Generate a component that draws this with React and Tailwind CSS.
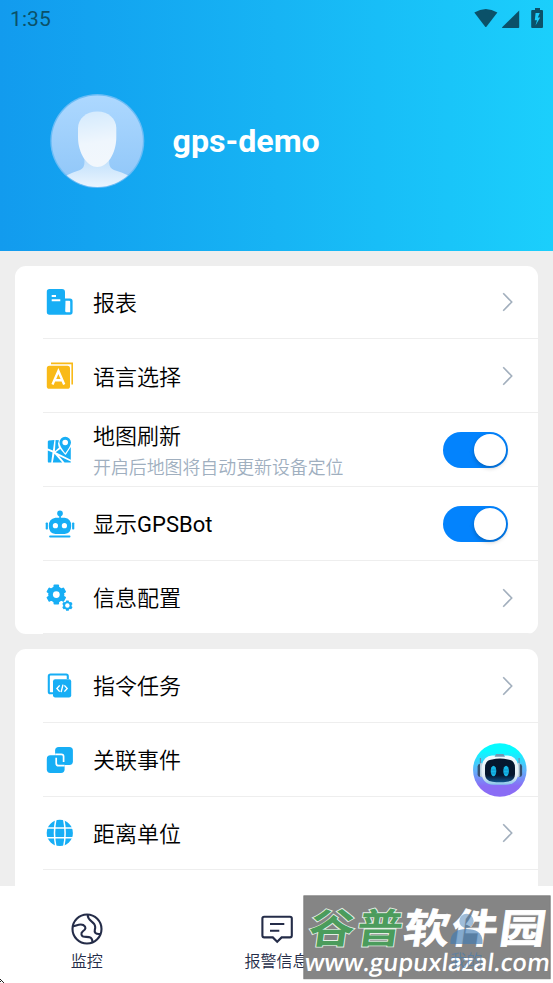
import React from "react";

const FONT = "font-['Roboto','Noto_Sans_CJK_SC',sans-serif]";
const BLUE = "#17aef5";

function StatusBar() {
  return (
    <div className="flex h-10 items-start justify-between pl-[10px] pr-[9px] text-[#0b5169]">
      <span className="mt-[4px] text-[21px] leading-[30px] tracking-[0.1px]">1:35</span>
      <svg className="mt-[6px]" width="71" height="24" viewBox="0 0 71 24" fill="currentColor">
        <path d="M1.3 6.6Q12.8-.8 24.4 6.6L13.6 20.4Q12.8 21.4 12 20.4Z" />
        <path d="M46.2 4.6V21.2Q46.2 22 45.4 22H29.8Q28.6 22 29.4 21Z" />
        <path
          fillRule="evenodd"
          d="M62 2H67V4H69Q70 4 70 5V21Q70 22 69 22H59.2Q58.2 22 58.2 21V5Q58.2 4 59.2 4H62ZM62.6 7 61.8 14.2H64L62.5 19.6 67.2 11.4H64.8L66.8 7Z"
        />
      </svg>
    </div>
  );
}

function Avatar() {
  return (
    <svg width="95" height="95" viewBox="0 0 95 95">
      <defs>
        <linearGradient id="avBg" x1="0" y1="0" x2="0" y2="1">
          <stop offset="0" stopColor="#add8ff" />
          <stop offset="1" stopColor="#8fc6f8" />
        </linearGradient>
        <linearGradient id="avFace" x1="0" y1="0" x2="0.1" y2="1">
          <stop offset="0" stopColor="#d3eafd" />
          <stop offset="0.6" stopColor="#eff6fd" />
          <stop offset="1" stopColor="#f2f7fc" />
        </linearGradient>
        <linearGradient id="avBody" x1="0" y1="0" x2="0" y2="1">
          <stop offset="0" stopColor="#b8dcfb" />
          <stop offset="1" stopColor="#eef6fe" />
        </linearGradient>
        <clipPath id="avClip"><circle cx="47.3" cy="47" r="46" /></clipPath>
      </defs>
      <circle cx="47.3" cy="47" r="47" fill="#6abcf6" />
      <circle cx="47.3" cy="47" r="45.6" fill="url(#avBg)" />
      <g clipPath="url(#avClip)">
        <path d="M34.4 60V69Q34.4 74 30 76L23 78.5Q17.5 80.5 15 83V95H80V83Q77 80.5 71.6 78.5L64 76Q59.2 74 59.2 69V60Z" fill="url(#avBody)" />
        <path d="M28 34C28 25 36 17.5 47.3 17.5S66.3 25 66.3 34V43C66.3 60 57 73 47.3 73S28 60 28 43Z" fill="url(#avFace)" />
      </g>
    </svg>
  );
}

function ReportIcon() {
  return (
    <svg width="28" height="28" viewBox="0 0 28 28">
      <path d="M3.5 1H16Q19 1 19 4V10.6H24Q26.6 10.6 26.6 13.2V24Q26.6 26.8 24 26.8H3.5Q.8 26.8 .8 24V3.7Q.8 1 3.5 1Z" fill={BLUE} />
      <path d="M5.7 7.1H10V9H5.7ZM5.7 11.2H14.3V13.2H5.7ZM19.5 12.8H23.2Q24.2 12.8 24.2 13.8V24.3H20.4Q19.2 24.3 19.2 23Z" fill="#fff" />
    </svg>
  );
}

function LanguageIcon() {
  return (
    <svg width="28" height="28" viewBox="0 0 28 28">
      <path d="M5 1.4H26.2V22.6" fill="none" stroke="#f9ba18" strokeWidth="1.6" />
      <rect x=".8" y="3.8" width="23.2" height="23" rx="2.6" fill="#f9ba18" />
      <path d="M6.5 22.5 12.4 9 18.2 22.5M8.5 18.3H16.3" fill="none" stroke="#fff" strokeWidth="2.4" />
    </svg>
  );
}

function MapIcon() {
  return (
    <svg width="28" height="28" viewBox="0 0 28 28">
      <path d="M2.6 4.6 8.4 4 6.9 14.6 1.8 12.5V5.5ZM9.6 4 13 4.2 12 7.5Q12.2 9.5 13 11.5L8.9 15.2ZM1.8 14.6 6.5 16.6 5.2 26.6H3Q1.8 26.6 1.8 25.4ZM8.5 17.8 16.2 26.6H6.8ZM14.2 13 19 18.6Q19.5 19.1 20 18.4L24.8 11V23.7L9.7 16.2ZM13 19.9 24.8 25.6V26.6H18.5Z" fill={BLUE} />
      <path fillRule="evenodd" d="M19.2.8A5.8 5.8 0 0 1 25 6.6Q25 9.7 19.2 17.3 13.4 9.7 13.4 6.6A5.8 5.8 0 0 1 19.2.8ZM19.2 3.7A2.8 2.8 0 1 0 19.2 9.3 2.8 2.8 0 1 0 19.2 3.7Z" fill={BLUE} />
    </svg>
  );
}

function RobotIcon() {
  return (
    <svg width="30" height="28" viewBox="0 0 30 28" fill={BLUE}>
      <circle cx="15" cy="3.4" r="2.8" />
      <rect x="14.2" y="4" width="1.7" height="5" />
      <rect x=".7" y="12.4" width="2.2" height="7.2" rx=".8" />
      <rect x="27.1" y="12.4" width="2.2" height="7.2" rx=".8" />
      <path fillRule="evenodd" d="M10.4 7.8H19.6Q26.2 8.5 26.2 15.9T19.6 23.9H10.4Q3.8 23 3.8 15.9T10.4 7.8ZM10.4 13.1A2.6 2.6 0 1 0 10.4 18.3 2.6 2.6 0 1 0 10.4 13.1ZM19.4 13.1A2.6 2.6 0 1 0 19.4 18.3 2.6 2.6 0 1 0 19.4 13.1Z" />
      <rect x="4.1" y="25.4" width="21.4" height="2.1" rx="1" />
    </svg>
  );
}

function Gear({ x, y, s, hole }) {
  return (
    <g transform={`translate(${x} ${y}) scale(${s})`}>
      {[0, 60, 120].map((a) => (
        <rect key={a} x="-2.8" y="-10" width="5.6" height="20" rx="1" transform={`rotate(${a})`} fill={BLUE} />
      ))}
      <circle r="8.1" fill={BLUE} />
      <circle r={hole} fill="#fff" />
    </g>
  );
}

function GearsIcon() {
  return (
    <svg width="28" height="28" viewBox="0 0 28 28">
      <Gear x={10.3} y={10.6} s={1} hole={3.4} />
      <Gear x={21.4} y={21.6} s={0.52} hole={4.3} />
    </svg>
  );
}

function CommandIcon() {
  return (
    <svg width="28" height="28" viewBox="0 0 28 28">
      <path d="M7 21.2H4.3Q2.8 21.2 2.8 19.7V4.2Q2.8 2.5 4.5 2.5H20.2Q21.8 2.5 21.8 4.2V7" fill="none" stroke={BLUE} strokeWidth="2.1" />
      <rect x="7" y="7.2" width="18.2" height="18.2" rx="2.2" fill={BLUE} />
      <path d="M13.7 13.4 10.9 16.5 13.7 19.6M18.4 13.4 21.2 16.5 18.4 19.6M17 12.7 15.1 20.2" fill="none" stroke="#fff" strokeWidth="1.4" />
    </svg>
  );
}

function LinkIcon() {
  return (
    <svg width="28" height="28" viewBox="0 0 28 28">
      <rect x="9.1" y=".9" width="17.8" height="18" rx="3.6" fill={BLUE} />
      <rect x=".8" y="9.3" width="17.8" height="17.6" rx="3.6" fill={BLUE} />
      <path d="M9.2 8.3H15.3Q17.6 8.3 17.6 10.6V16M10.2 11.8V17.2Q10.2 19.7 12.7 19.7H18.6" fill="none" stroke="#fff" strokeWidth="1.7" />
    </svg>
  );
}

function GlobeIcon() {
  return (
    <svg width="28" height="28" viewBox="0 0 28 28">
      <circle cx="13.8" cy="13.9" r="13.1" fill={BLUE} />
      <path d="M9.8.5Q7.2 13.9 9.8 27.3M17.8.5Q20.4 13.9 17.8 27.3M0 8.9H28M0 18.8H28" fill="none" stroke="#fff" strokeWidth="1.5" />
    </svg>
  );
}

function Chevron() {
  return (
    <svg className="mr-[24px]" width="12" height="20" viewBox="0 0 12 20">
      <path d="M1.2 1.3 9.7 10 1.2 18.7" fill="none" stroke="#a2afbd" strokeWidth="1.6" />
    </svg>
  );
}

function Toggle() {
  return (
    <div className="mr-[30px] flex h-9 w-[65.5px] items-center justify-end rounded-full bg-[#0383fd] pr-[2px]">
      <div className="size-8 rounded-full bg-white shadow-[0_2px_4px_rgba(0,0,0,0.25)]" />
    </div>
  );
}

function Row({ icon, label, hint, right }) {
  return (
    <div className="ml-[28px] flex h-[73.8px] items-center border-b-[1.5px] border-[#eee] pt-[1px]">
      <div className="flex w-[34px] shrink-0 justify-center">{icon}</div>
      <div className="ml-[16px] flex-1 font-[350]">
        <div className="mt-[3px] text-[22px] leading-[32px]">{label}</div>
        {hint && <div className="text-[17.9px] leading-[29px] text-[#a0afbf]">{hint}</div>}
      </div>
      {right}
    </div>
  );
}

function BotBadge() {
  return (
    <svg className="absolute left-[471px] top-[741px]" width="58" height="58" viewBox="0 0 58 58">
      <defs>
        <linearGradient id="botBg" x1="0" y1="0" x2="0" y2="1">
          <stop offset="0.15" stopColor="#08faff" />
          <stop offset="0.5" stopColor="#60b4fa" />
          <stop offset="0.8" stopColor="#8a6cf5" />
        </linearGradient>
        <linearGradient id="botFace" x1="0" y1="0" x2="0" y2="1">
          <stop offset="0" stopColor="#06172e" />
          <stop offset="0.7" stopColor="#05162f" />
          <stop offset="1" stopColor="#0e5590" />
        </linearGradient>
        <linearGradient id="botShell" x1="0" y1="0" x2="0" y2="1">
          <stop offset="0" stopColor="#f4fcff" />
          <stop offset="0.75" stopColor="#e1ebf4" />
          <stop offset="1" stopColor="#83c5e9" />
        </linearGradient>
      </defs>
      <circle cx="28.8" cy="29" r="28.3" fill="#fff" />
      <circle cx="28.8" cy="29" r="26.8" fill="url(#botBg)" />
      <path d="M9.4 17V26M48.1 17V26" stroke="#6b8ca9" strokeWidth="1.2" />
      <rect x="6.6" y="23" width="5" height="13" rx="2.4" fill="#364f6f" />
      <rect x="46.1" y="23" width="5" height="13" rx="2.4" fill="#364f6f" />
      <rect x="9" y="22" width="2.5" height="14" rx="1.2" fill="#b9cede" />
      <rect x="46.2" y="22" width="2.5" height="14" rx="1.2" fill="#b9cede" />
      <path d="M21 14.4H37Q47.5 15.5 47.5 29.5 47.5 43.5 35 43.7H22.5Q10.4 43.5 10.4 29.5 10.4 15.5 21 14.4Z" fill="url(#botShell)" />
      <path d="M23.6 15.8 25 13H32.5L34 15.8Z" fill="#7298b4" />
      <path d="M21 18.4Q29 16.8 37 18.4 44 19 44 27V33Q44 40 36 40.7 29 42 21.5 40.7 14 40 14 33V27Q14 19 21 18.4Z" fill="url(#botFace)" />
      <ellipse cx="22.5" cy="30" rx="2.8" ry="5.2" fill="#16b7e8" />
      <ellipse cx="35.1" cy="30" rx="2.8" ry="5.2" fill="#16b7e8" />
      <path d="M20.2 29H24.8M20.2 32H24.8M32.8 29H37.4M32.8 32H37.4" stroke="#0b84bd" strokeWidth=".7" />
    </svg>
  );
}

function NavItem({ icon, label }) {
  return (
    <div className="flex flex-1 flex-col items-center pt-[26px] text-[#242c48]">
      {icon}
      <span className="mt-[4px] text-[16px] leading-[24px] font-[350]">{label}</span>
    </div>
  );
}

function Watermark() {
  return (
    <svg className="absolute left-[303px] top-[895px]" width="250" height="88" viewBox="0 0 250 88">
      <rect x=".8" y=".8" width="246.4" height="83" fill="#858585" />
      <rect x=".8" y=".8" width="246.4" height="83" fill="none" stroke="#777" strokeWidth=".8" />
      <g transform="translate(4 47.5) skewX(-8)" fontSize="46" fontWeight="700" className="font-['Noto_Sans_CJK_SC',sans-serif]">
        <text x="0" y="0" textLength="94" fill="#4b9c5c" stroke="#e4eee5" strokeWidth="2" paintOrder="stroke" transform="scale(1 .88)">谷普</text>
        <text x="95" y="0" textLength="142" fill="#fff" stroke="#fff" strokeWidth=".8" transform="scale(1 .88)">软件园</text>
      </g>
      <g fill="#427cb4">
        <circle cx="163.5" cy="26" r="7.2" opacity=".5" />
        <path d="M147.5 49V45Q149 34 163.5 34T179.5 45V49Z" opacity=".65" />
      </g>
      <g transform="translate(1 75.8) skewX(-7)">
        <text x="0" y="0" textLength="245" lengthAdjust="spacingAndGlyphs" fontSize="24" fontWeight="600" fill="#fff" className="font-['Open_Sans',sans-serif]">www.gupuxlazal.com</text>
      </g>
      <text x="147.5" y="71" fontSize="16" fontWeight="350" fill="#427cb4" opacity=".6">我的</text>
    </svg>
  );
}

export default function App() {
  return (
    <div className={`relative flex h-[983px] w-[553px] flex-col overflow-hidden bg-[#eee] text-black ${FONT}`}>
      <header className="h-[250.5px] shrink-0 bg-linear-to-r from-[#129bee] via-[#17b4f4] to-[#1bcffc]">
        <StatusBar />
        <div className="mt-[54px] flex items-center pl-[50px]">
          <Avatar />
          <h1 className="-mt-[2px] ml-[27.5px] text-[32.2px] leading-[40px] font-bold text-white">gps-demo</h1>
        </div>
      </header>

      <main className="flex min-h-0 flex-1 flex-col gap-[15.5px] overflow-hidden px-[15px] pt-[15px]">
        <section className="h-[368px] shrink-0 overflow-hidden rounded-[11px] bg-white">
          <Row icon={<ReportIcon />} label="报表" right={<Chevron />} />
          <Row icon={<LanguageIcon />} label="语言选择" right={<Chevron />} />
          <Row icon={<MapIcon />} label="地图刷新" hint="开启后地图将自动更新设备定位" right={<Toggle />} />
          <Row icon={<RobotIcon />} label={<>显示<span className="font-normal">GPSBot</span></>} right={<Toggle />} />
          <Row icon={<GearsIcon />} label="信息配置" right={<Chevron />} />
        </section>
        <section className="h-[300px] shrink-0 overflow-hidden rounded-[11px] bg-white">
          <Row icon={<CommandIcon />} label="指令任务" right={<Chevron />} />
          <Row icon={<LinkIcon />} label="关联事件" right={<Chevron />} />
          <Row icon={<GlobeIcon />} label="距离单位" right={<Chevron />} />
        </section>
      </main>

      <div className="h-[97px] shrink-0 bg-white">
        <nav className="-mx-[8px] flex">
          <NavItem
            label="监控"
            icon={
              <svg width="34" height="34" viewBox="0 0 34 34" fill="none" stroke="currentColor" strokeWidth="2.1">
                <circle cx="17" cy="17" r="14.5" />
                <path d="M3 14.2C6.5 13.6 10 11.5 13.2 13 16.5 14.8 16 17.6 12.8 19.4 10.5 21 11 24.6 14.5 24.8 18.5 25 22.5 24 22.5 30.5M17.7 3C17.7 10 24.8 8.5 25.2 15 25.4 18 23.5 18.5 25.5 21 27 22.5 28.5 22 30.5 22" />
              </svg>
            }
          />
          <NavItem
            label="报警信息"
            icon={
              <svg width="34" height="34" viewBox="0 0 34 34" fill="none" stroke="currentColor" strokeWidth="2.1">
                <path d="M4.2 4.8H30Q31.8 4.8 31.8 6.6V23.6Q31.8 25.4 30 25.4H21.6L17.2 29.8 12.8 25.4H4.2Q2.4 25.4 2.4 23.6V6.6Q2.4 4.8 4.2 4.8Z" />
                <path d="M10 12H24.3M10 18.7H19.3" />
              </svg>
            }
          />
          <div className="flex-1" />
        </nav>
      </div>

      <BotBadge />
      <Watermark />
      <svg className="absolute left-0 top-[978px]" width="5" height="5" viewBox="0 0 5 5">
        <path d="M0 1H1V2H2V3H3V4H4V5H3V4H2V3H1V4H0V3H1V2H0Z" fill="#222" />
      </svg>
    </div>
  );
}
